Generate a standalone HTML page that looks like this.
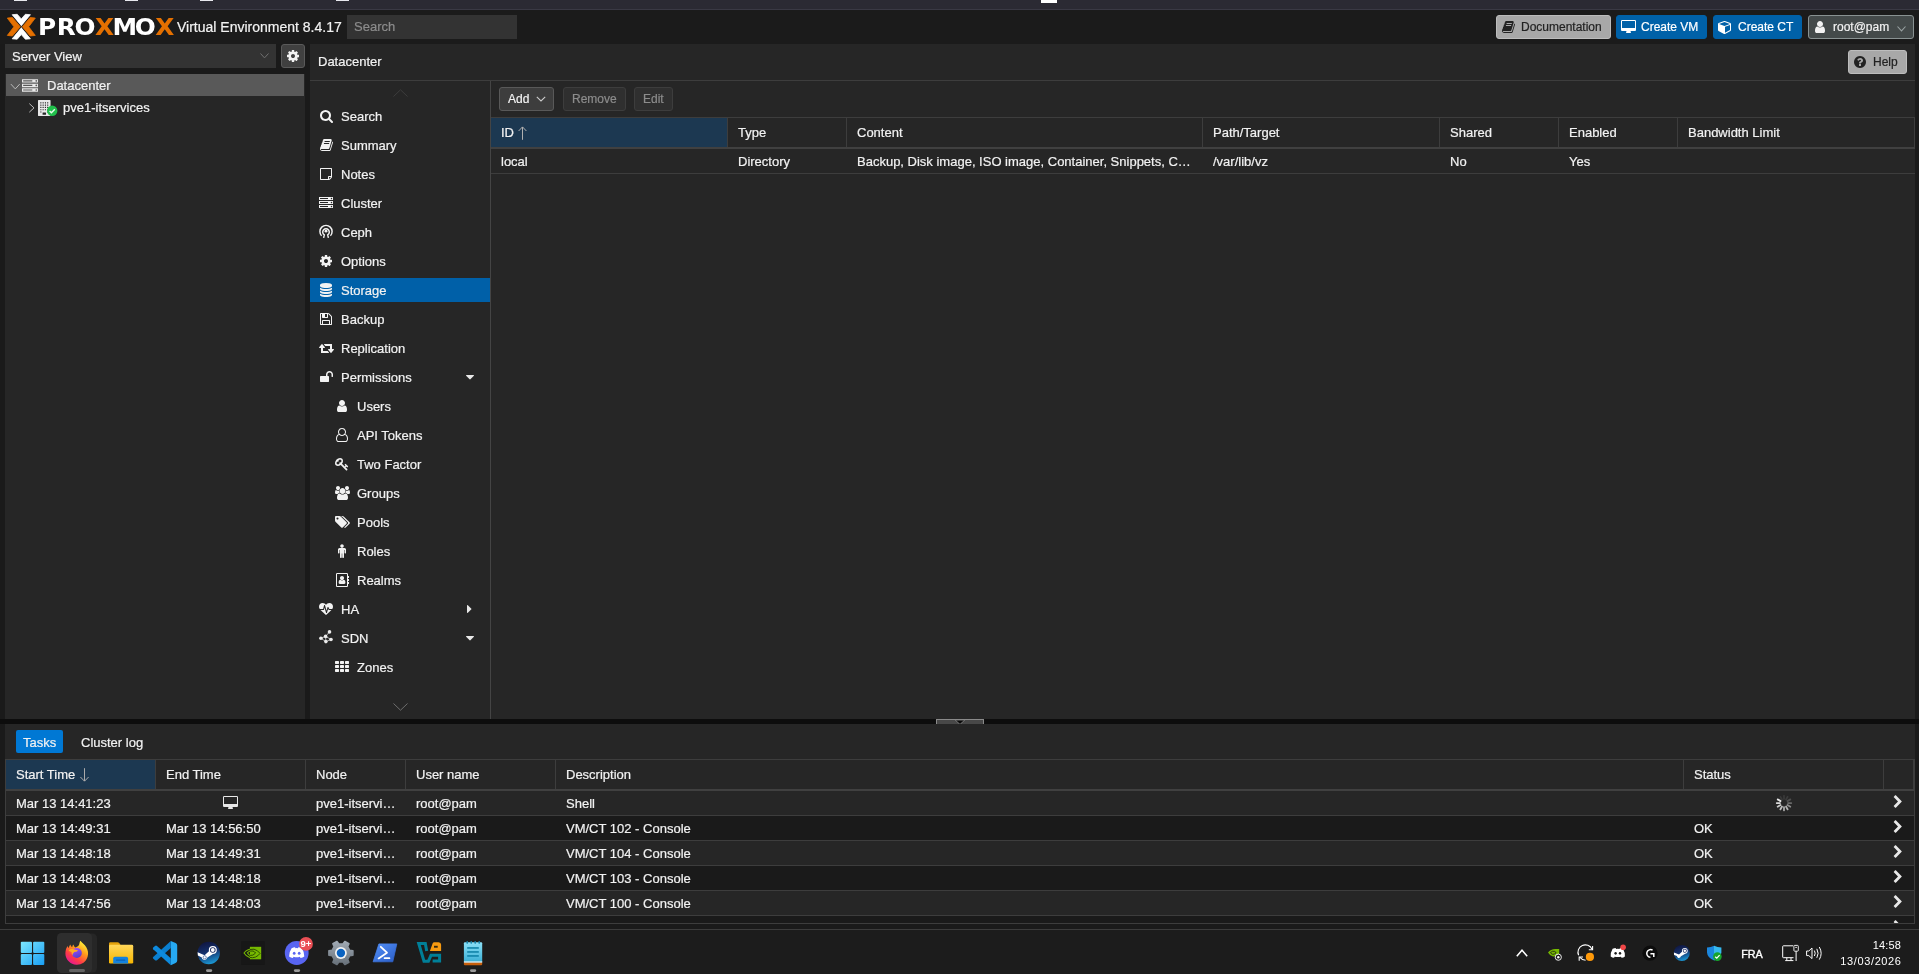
<!DOCTYPE html>
<html><head><meta charset="utf-8"><title>pve1-itservices - Proxmox Virtual Environment</title>
<style>
*{box-sizing:border-box}
html,body{margin:0;padding:0;background:#1a1a1a}
body{width:1919px;height:974px;overflow:hidden;background:#1a1a1a;color:#f2f2f2;font:13px "Liberation Sans",sans-serif;position:relative}
#root{left:0;top:0;width:1919px;height:974px;will-change:transform}
div,span,svg{position:absolute}
.ic{overflow:visible}
.t{white-space:pre;line-height:16px;height:16px;-webkit-text-stroke:0.2px currentColor}
</style></head>
<body><div id="root">
<div style="left:0px;top:0px;width:1919px;height:9px;background:#2b2a33;"></div>
<div style="left:0px;top:9px;width:1919px;height:1px;background:#3a3944;"></div>
<div style="left:14px;top:0px;width:13px;height:1px;background:#e8e8ee;"></div>
<div style="left:125px;top:0px;width:13px;height:1px;background:#e8e8ee;"></div>
<div style="left:200px;top:0px;width:13px;height:1px;background:#e8e8ee;"></div>
<div style="left:336px;top:0px;width:13px;height:1px;background:#e8e8ee;"></div>
<div style="left:1041px;top:0px;width:16px;height:3px;background:#ffffff;"></div>
<div style="left:0px;top:10px;width:1919px;height:34px;background:#1b1b1b;"></div>
<svg style="left:0px;top:10px;width:180px;height:34px" viewBox="0 10 180 34"><defs><linearGradient id="gpx" gradientUnits="userSpaceOnUse" x1="0" y1="0" x2="170" y2="0"><stop offset="0" stop-color="#fff"/><stop offset="0.5056" stop-color="#fff"/><stop offset="0.5056" stop-color="#e57000"/><stop offset="0.6107" stop-color="#e57000"/><stop offset="0.6107" stop-color="#fff"/><stop offset="0.8275" stop-color="#fff"/><stop offset="0.8275" stop-color="#e57000"/><stop offset="1" stop-color="#e57000"/></linearGradient></defs><g stroke-linejoin="round" stroke-width="0.8">
<path d="M12.2 14.7 L17.2 14.3 L21.3 18.9 L25.4 14.3 L30.4 14.7 L21.3 26.2 Z" fill="#fff" stroke="#fff"/>
<path d="M12.2 38.8 L17.2 39.2 L21.3 34.6 L25.4 39.2 L30.4 38.8 L21.3 27.3 Z" fill="#fff" stroke="#fff"/>
<path d="M7.3 18.1 L12.4 17.5 L20.3 26.75 L12.4 36 L7.3 35.4 L13.9 26.75 Z" fill="#1b1b1b" stroke="#1b1b1b" stroke-width="2"/>
<path d="M35.3 18.1 L30.2 17.5 L22.3 26.75 L30.2 36 L35.3 35.4 L28.7 26.75 Z" fill="#1b1b1b" stroke="#1b1b1b" stroke-width="2"/>
<path d="M7.3 18.1 L12.4 17.5 L20.3 26.75 L12.4 36 L7.3 35.4 L13.9 26.75 Z" fill="#e57000" stroke="#e57000"/>
<path d="M35.3 18.1 L30.2 17.5 L22.3 26.75 L30.2 36 L35.3 35.4 L28.7 26.75 Z" fill="#e57000" stroke="#e57000"/>
</g><text transform="scale(1.1,1)" x="34.61 51.50 67.82 86.29 102.34 122.50 141.20" y="35" font-family="DejaVu Sans, Liberation Sans, sans-serif" font-stretch="normal" font-weight="bold" font-size="22.5" fill="url(#gpx)">PROXMOX</text></svg>
<span class="t" style="left:177px;top:19px;font-size:14px">Virtual Environment 8.4.17</span>
<div style="left:347px;top:15px;width:170px;height:24px;background:#333333;"></div>
<span class="t" style="left:354px;top:19px;color:#8c8c8c">Search</span>
<div style="left:1496px;top:15px;width:115px;height:24px;background:#a8a8a8;border:1px solid #bdbdbd;border-radius:3px"></div><svg class="ic" style="left:1502px;top:20px;width:13.00px;height:14px;" viewBox="0 -1536 1664 1792"><path fill="#222" transform="scale(1,-1)" d="M1639 1058q40 -57 18 -129l-275 -906q-19 -64 -76.5 -107.5t-122.5 -43.5h-923q-77 0 -148.5 53.5t-99.5 131.5q-24 67 -2 127q0 4 3 27t4 37q1 8 -3 21.5t-3 19.5q2 11 8 21t16.5 23.5t16.5 23.5q23 38 45 91.5t30 91.5q3 10 0.5 30t-0.5 28q3 11 17 28t17 23 q21 36 42 92t25 90q1 9 -2.5 32t0.5 28q4 13 22 30.5t22 22.5q19 26 42.5 84.5t27.5 96.5q1 8 -3 25.5t-2 26.5q2 8 9 18t18 23t17 21q8 12 16.5 30.5t15 35t16 36t19.5 32t26.5 23.5t36 11.5t47.5 -5.5l-1 -3q38 9 51 9h761q74 0 114 -56t18 -130l-274 -906 q-36 -119 -71.5 -153.5t-128.5 -34.5h-869q-27 0 -38 -15q-11 -16 -1 -43q24 -70 144 -70h923q29 0 56 15.5t35 41.5l300 987q7 22 5 57q38 -15 59 -43zM575 1056q-4 -13 2 -22.5t20 -9.5h608q13 0 25.5 9.5t16.5 22.5l21 64q4 13 -2 22.5t-20 9.5h-608q-13 0 -25.5 -9.5 t-16.5 -22.5zM492 800q-4 -13 2 -22.5t20 -9.5h608q13 0 25.5 9.5t16.5 22.5l21 64q4 13 -2 22.5t-20 9.5h-608q-13 0 -25.5 -9.5t-16.5 -22.5z"/></svg><span class="t" style="left:1521px;top:19.0px;font-size:12px;color:#222">Documentation</span>
<div style="left:1616px;top:15px;width:91px;height:24px;background:#0061a8;border:1px solid #0061a8;border-radius:3px"></div><svg class="ic" style="left:1621px;top:20px;width:15.00px;height:14px;" viewBox="0 -1536 1920 1792"><path fill="#fff" transform="scale(1,-1)" d="M1792 544v832q0 13 -9.5 22.5t-22.5 9.5h-1600q-13 0 -22.5 -9.5t-9.5 -22.5v-832q0 -13 9.5 -22.5t22.5 -9.5h1600q13 0 22.5 9.5t9.5 22.5zM1920 1376v-1088q0 -66 -47 -113t-113 -47h-544q0 -37 16 -77.5t32 -71t16 -43.5q0 -26 -19 -45t-45 -19h-512q-26 0 -45 19 t-19 45q0 14 16 44t32 70t16 78h-544q-66 0 -113 47t-47 113v1088q0 66 47 113t113 47h1600q66 0 113 -47t47 -113z"/></svg><span class="t" style="left:1641px;top:19.0px;font-size:12px;color:#fff">Create VM</span>
<div style="left:1713px;top:15px;width:89px;height:24px;background:#0061a8;border:1px solid #0061a8;border-radius:3px"></div><svg class="ic" style="left:1718px;top:20px;width:14.00px;height:14px;" viewBox="0 -1536 1792 1792"><path fill="#fff" transform="scale(1,-1)" d="M896 -93l640 349v636l-640 -233v-752zM832 772l698 254l-698 254l-698 -254zM1664 1024v-768q0 -35 -18 -65t-49 -47l-704 -384q-28 -16 -61 -16t-61 16l-704 384q-31 17 -49 47t-18 65v768q0 40 23 73t61 47l704 256q22 8 44 8t44 -8l704 -256q38 -14 61 -47t23 -73z "/></svg><span class="t" style="left:1738px;top:19.0px;font-size:12px;color:#fff">Create CT</span>
<div style="left:1808px;top:15px;width:106px;height:24px;background:#444a4a;border:1px solid #899292;border-radius:3px"></div><svg class="ic" style="left:1815px;top:20px;width:10.00px;height:14px;" viewBox="0 -1536 1280 1792"><path fill="#f2f2f2" transform="scale(1,-1)" d="M1280 137q0 -109 -62.5 -187t-150.5 -78h-854q-88 0 -150.5 78t-62.5 187q0 85 8.5 160.5t31.5 152t58.5 131t94 89t134.5 34.5q131 -128 313 -128t313 128q76 0 134.5 -34.5t94 -89t58.5 -131t31.5 -152t8.5 -160.5zM1024 1024q0 -159 -112.5 -271.5t-271.5 -112.5 t-271.5 112.5t-112.5 271.5t112.5 271.5t271.5 112.5t271.5 -112.5t112.5 -271.5z"/></svg><span class="t" style="left:1833px;top:19.0px;font-size:12px;color:#f2f2f2">root@pam</span>
<svg style="left:1896.5px;top:25.6px;width:9px;height:6px" viewBox="0 0 9 6"><path d="M0.5 0.5 L4.5 4.9 L8.5 0.5" stroke="#98a1a1" stroke-width="1.1" fill="none"/></svg>
<div style="left:5px;top:44px;width:300px;height:675px;background:#262626;"></div>
<div style="left:5px;top:44px;width:271px;height:24px;background:#333333;"></div>
<span class="t" style="left:12px;top:49px;">Server View</span>
<svg style="left:259.5px;top:52.6px;width:9px;height:6px" viewBox="0 0 9 6"><path d="M0.5 0.5 L4.5 4.9 L8.5 0.5" stroke="#707070" stroke-width="1" fill="none"/></svg>
<div style="left:276px;top:44px;width:29px;height:24px;background:#1a1a1a;"></div>
<div style="left:281px;top:44px;width:24px;height:24px;background:#404040;border:1px solid #5a5a5a;border-radius:3px"></div>
<svg class="ic" style="left:287px;top:49px;width:12.00px;height:14px;" viewBox="0 -1536 1536 1792"><path fill="#f2f2f2" transform="scale(1,-1)" d="M1024 640q0 106 -75 181t-181 75t-181 -75t-75 -181t75 -181t181 -75t181 75t75 181zM1536 749v-222q0 -12 -8 -23t-20 -13l-185 -28q-19 -54 -39 -91q35 -50 107 -138q10 -12 10 -25t-9 -23q-27 -37 -99 -108t-94 -71q-12 0 -26 9l-138 108q-44 -23 -91 -38 q-16 -136 -29 -186q-7 -28 -36 -28h-222q-14 0 -24.5 8.5t-11.5 21.5l-28 184q-49 16 -90 37l-141 -107q-10 -9 -25 -9q-14 0 -25 11q-126 114 -165 168q-7 10 -7 23q0 12 8 23q15 21 51 66.5t54 70.5q-27 50 -41 99l-183 27q-13 2 -21 12.5t-8 23.5v222q0 12 8 23t19 13 l186 28q14 46 39 92q-40 57 -107 138q-10 12 -10 24q0 10 9 23q26 36 98.5 107.5t94.5 71.5q13 0 26 -10l138 -107q44 23 91 38q16 136 29 186q7 28 36 28h222q14 0 24.5 -8.5t11.5 -21.5l28 -184q49 -16 90 -37l142 107q9 9 24 9q13 0 25 -10q129 -119 165 -170q7 -8 7 -22 q0 -12 -8 -23q-15 -21 -51 -66.5t-54 -70.5q26 -50 41 -98l183 -28q13 -2 21 -12.5t8 -23.5z"/></svg>
<div style="left:5px;top:68px;width:300px;height:6px;background:#1a1a1a;"></div>
<div style="left:6px;top:74px;width:298px;height:22px;background:#595959;"></div>
<svg style="left:10px;top:83px;width:11px;height:7px" viewBox="0 0 11 7"><path d="M0.9 1.1 L5.3 5.9 L9.7 1.1" stroke="#bbb" stroke-width="1" fill="none"/></svg>
<svg class="ic" style="left:22px;top:78px;width:16.00px;height:16px;" viewBox="0 -1536 1792 1792"><path fill="#e8e8e8" transform="scale(1,-1)" d="M128 128h1024v128h-1024v-128zM128 640h1024v128h-1024v-128zM1696 192q0 40 -28 68t-68 28t-68 -28t-28 -68t28 -68t68 -28t68 28t28 68zM128 1152h1024v128h-1024v-128zM1696 704q0 40 -28 68t-68 28t-68 -28t-28 -68t28 -68t68 -28t68 28t28 68zM1696 1216 q0 40 -28 68t-68 28t-68 -28t-28 -68t28 -68t68 -28t68 28t28 68zM1792 384v-384h-1792v384h1792zM1792 896v-384h-1792v384h1792zM1792 1408v-384h-1792v384h1792z"/></svg>
<span class="t" style="left:47px;top:78px;">Datacenter</span>
<svg style="left:29px;top:103px;width:6px;height:10px" viewBox="0 0 6 10"><path d="M0.3 0.6 L5 4.9 L0.3 9.2" stroke="#bbb" stroke-width="1" fill="none"/></svg>
<svg class="ic" style="left:38px;top:100px;width:13.71px;height:16px;" viewBox="0 -1536 1536 1792"><path fill="#e8e8e8" transform="scale(1,-1)" d="M1344 1536q26 0 45 -19t19 -45v-1664q0 -26 -19 -45t-45 -19h-1280q-26 0 -45 19t-19 45v1664q0 26 19 45t45 19h1280zM512 1248v-64q0 -14 9 -23t23 -9h64q14 0 23 9t9 23v64q0 14 -9 23t-23 9h-64q-14 0 -23 -9t-9 -23zM512 992v-64q0 -14 9 -23t23 -9h64q14 0 23 9 t9 23v64q0 14 -9 23t-23 9h-64q-14 0 -23 -9t-9 -23zM512 736v-64q0 -14 9 -23t23 -9h64q14 0 23 9t9 23v64q0 14 -9 23t-23 9h-64q-14 0 -23 -9t-9 -23zM512 480v-64q0 -14 9 -23t23 -9h64q14 0 23 9t9 23v64q0 14 -9 23t-23 9h-64q-14 0 -23 -9t-9 -23zM384 160v64 q0 14 -9 23t-23 9h-64q-14 0 -23 -9t-9 -23v-64q0 -14 9 -23t23 -9h64q14 0 23 9t9 23zM384 416v64q0 14 -9 23t-23 9h-64q-14 0 -23 -9t-9 -23v-64q0 -14 9 -23t23 -9h64q14 0 23 9t9 23zM384 672v64q0 14 -9 23t-23 9h-64q-14 0 -23 -9t-9 -23v-64q0 -14 9 -23t23 -9h64 q14 0 23 9t9 23zM384 928v64q0 14 -9 23t-23 9h-64q-14 0 -23 -9t-9 -23v-64q0 -14 9 -23t23 -9h64q14 0 23 9t9 23zM384 1184v64q0 14 -9 23t-23 9h-64q-14 0 -23 -9t-9 -23v-64q0 -14 9 -23t23 -9h64q14 0 23 9t9 23zM896 -96v192q0 14 -9 23t-23 9h-320q-14 0 -23 -9 t-9 -23v-192q0 -14 9 -23t23 -9h320q14 0 23 9t9 23zM896 416v64q0 14 -9 23t-23 9h-64q-14 0 -23 -9t-9 -23v-64q0 -14 9 -23t23 -9h64q14 0 23 9t9 23zM896 672v64q0 14 -9 23t-23 9h-64q-14 0 -23 -9t-9 -23v-64q0 -14 9 -23t23 -9h64q14 0 23 9t9 23zM896 928v64 q0 14 -9 23t-23 9h-64q-14 0 -23 -9t-9 -23v-64q0 -14 9 -23t23 -9h64q14 0 23 9t9 23zM896 1184v64q0 14 -9 23t-23 9h-64q-14 0 -23 -9t-9 -23v-64q0 -14 9 -23t23 -9h64q14 0 23 9t9 23zM1152 160v64q0 14 -9 23t-23 9h-64q-14 0 -23 -9t-9 -23v-64q0 -14 9 -23t23 -9h64 q14 0 23 9t9 23zM1152 416v64q0 14 -9 23t-23 9h-64q-14 0 -23 -9t-9 -23v-64q0 -14 9 -23t23 -9h64q14 0 23 9t9 23zM1152 672v64q0 14 -9 23t-23 9h-64q-14 0 -23 -9t-9 -23v-64q0 -14 9 -23t23 -9h64q14 0 23 9t9 23zM1152 928v64q0 14 -9 23t-23 9h-64q-14 0 -23 -9 t-9 -23v-64q0 -14 9 -23t23 -9h64q14 0 23 9t9 23zM1152 1184v64q0 14 -9 23t-23 9h-64q-14 0 -23 -9t-9 -23v-64q0 -14 9 -23t23 -9h64q14 0 23 9t9 23z"/></svg>
<svg style="left:46px;top:105px;width:12px;height:12px" viewBox="0 0 12 12"><circle cx="6.2" cy="5.7" r="5.2" fill="#21bf4b"/><path d="M3.6 5.9 L5.4 7.7 L8.8 4.2" stroke="#eafbee" stroke-width="1.4" fill="none"/></svg>
<span class="t" style="left:63px;top:100px;">pve1-itservices</span>
<div style="left:310px;top:44px;width:1605px;height:675px;background:#262626;"></div>
<span class="t" style="left:318px;top:54px;">Datacenter</span>
<div style="left:310px;top:80px;width:1605px;height:1px;background:#3d3d3d;"></div>
<div style="left:1848px;top:50px;width:59px;height:24px;background:#a8a8a8;border:1px solid #bdbdbd;border-radius:3px"></div><svg class="ic" style="left:1854px;top:54.5px;width:12.00px;height:14px;" viewBox="0 -1536 1536 1792"><path fill="#222" transform="scale(1,-1)" d="M896 160v192q0 14 -9 23t-23 9h-192q-14 0 -23 -9t-9 -23v-192q0 -14 9 -23t23 -9h192q14 0 23 9t9 23zM1152 832q0 88 -55.5 163t-138.5 116t-170 41q-243 0 -371 -213q-15 -24 8 -42l132 -100q7 -6 19 -6q16 0 25 12q53 68 86 92q34 24 86 24q48 0 85.5 -26t37.5 -59 q0 -38 -20 -61t-68 -45q-63 -28 -115.5 -86.5t-52.5 -125.5v-36q0 -14 9 -23t23 -9h192q14 0 23 9t9 23q0 19 21.5 49.5t54.5 49.5q32 18 49 28.5t46 35t44.5 48t28 60.5t12.5 81zM1536 640q0 -209 -103 -385.5t-279.5 -279.5t-385.5 -103t-385.5 103t-279.5 279.5 t-103 385.5t103 385.5t279.5 279.5t385.5 103t385.5 -103t279.5 -279.5t103 -385.5z"/></svg><span class="t" style="left:1873px;top:54px;font-size:12px;color:#222">Help</span>
<div style="left:490px;top:81px;width:1px;height:638px;background:#444444;"></div>
<svg style="left:393px;top:89px;width:15px;height:8px" viewBox="0 0 15 8"><path d="M0.5 7.5 L7.5 0.8 L14.5 7.5" stroke="#3d3d3d" stroke-width="1" fill="none"/></svg>
<svg style="left:393px;top:703px;width:15px;height:8px" viewBox="0 0 15 8"><path d="M0.5 0.5 L7.5 7.2 L14.5 0.5" stroke="#6e6e6e" stroke-width="1" fill="none"/></svg>
<svg class="ic" style="left:319.5px;top:109px;width:13.00px;height:14px;" viewBox="0 -1536 1664 1792"><path fill="#f2f2f2" transform="scale(1,-1)" d="M1152 704q0 185 -131.5 316.5t-316.5 131.5t-316.5 -131.5t-131.5 -316.5t131.5 -316.5t316.5 -131.5t316.5 131.5t131.5 316.5zM1664 -128q0 -52 -38 -90t-90 -38q-54 0 -90 38l-343 342q-179 -124 -399 -124q-143 0 -273.5 55.5t-225 150t-150 225t-55.5 273.5 t55.5 273.5t150 225t225 150t273.5 55.5t273.5 -55.5t225 -150t150 -225t55.5 -273.5q0 -220 -124 -399l343 -343q37 -37 37 -90z"/></svg>
<span class="t" style="left:341px;top:109px;">Search</span>
<svg class="ic" style="left:319.5px;top:138px;width:13.00px;height:14px;" viewBox="0 -1536 1664 1792"><path fill="#f2f2f2" transform="scale(1,-1)" d="M1639 1058q40 -57 18 -129l-275 -906q-19 -64 -76.5 -107.5t-122.5 -43.5h-923q-77 0 -148.5 53.5t-99.5 131.5q-24 67 -2 127q0 4 3 27t4 37q1 8 -3 21.5t-3 19.5q2 11 8 21t16.5 23.5t16.5 23.5q23 38 45 91.5t30 91.5q3 10 0.5 30t-0.5 28q3 11 17 28t17 23 q21 36 42 92t25 90q1 9 -2.5 32t0.5 28q4 13 22 30.5t22 22.5q19 26 42.5 84.5t27.5 96.5q1 8 -3 25.5t-2 26.5q2 8 9 18t18 23t17 21q8 12 16.5 30.5t15 35t16 36t19.5 32t26.5 23.5t36 11.5t47.5 -5.5l-1 -3q38 9 51 9h761q74 0 114 -56t18 -130l-274 -906 q-36 -119 -71.5 -153.5t-128.5 -34.5h-869q-27 0 -38 -15q-11 -16 -1 -43q24 -70 144 -70h923q29 0 56 15.5t35 41.5l300 987q7 22 5 57q38 -15 59 -43zM575 1056q-4 -13 2 -22.5t20 -9.5h608q13 0 25.5 9.5t16.5 22.5l21 64q4 13 -2 22.5t-20 9.5h-608q-13 0 -25.5 -9.5 t-16.5 -22.5zM492 800q-4 -13 2 -22.5t20 -9.5h608q13 0 25.5 9.5t16.5 22.5l21 64q4 13 -2 22.5t-20 9.5h-608q-13 0 -25.5 -9.5t-16.5 -22.5z"/></svg>
<span class="t" style="left:341px;top:138px;">Summary</span>
<svg class="ic" style="left:320.0px;top:167px;width:12.00px;height:14px;" viewBox="0 -1536 1536 1792"><path fill="#f2f2f2" transform="scale(1,-1)" d="M1400 256h-248v-248q29 10 41 22l185 185q12 12 22 41zM1120 384h288v896h-1280v-1280h896v288q0 40 28 68t68 28zM1536 1312v-1024q0 -40 -20 -88t-48 -76l-184 -184q-28 -28 -76 -48t-88 -20h-1024q-40 0 -68 28t-28 68v1344q0 40 28 68t68 28h1344q40 0 68 -28t28 -68 z"/></svg>
<span class="t" style="left:341px;top:167px;">Notes</span>
<svg class="ic" style="left:319.0px;top:196px;width:14.00px;height:14px;" viewBox="0 -1536 1792 1792"><path fill="#f2f2f2" transform="scale(1,-1)" d="M128 128h1024v128h-1024v-128zM128 640h1024v128h-1024v-128zM1696 192q0 40 -28 68t-68 28t-68 -28t-28 -68t28 -68t68 -28t68 28t28 68zM128 1152h1024v128h-1024v-128zM1696 704q0 40 -28 68t-68 28t-68 -28t-28 -68t28 -68t68 -28t68 28t28 68zM1696 1216 q0 40 -28 68t-68 28t-68 -28t-28 -68t28 -68t68 -28t68 28t28 68zM1792 384v-384h-1792v384h1792zM1792 896v-384h-1792v384h1792zM1792 1408v-384h-1792v384h1792z"/></svg>
<span class="t" style="left:341px;top:196px;">Cluster</span>
<svg style="left:319px;top:223.8px;width:14px;height:14px" viewBox="0 0 14 14"><g fill="none" stroke="#f2f2f2" stroke-width="1.45">
<path d="M2.6 11.7 A6.1 6.1 0 1 1 11.4 11.7"/><path d="M4.6 13.8 L5.3 10.9 A3.3 3.3 0 1 1 8.7 10.9 L9.4 13.8"/></g>
<circle cx="7" cy="7.2" r="1.4" fill="#f2f2f2"/></svg>
<span class="t" style="left:341px;top:225px;">Ceph</span>
<svg class="ic" style="left:320.0px;top:254px;width:12.00px;height:14px;" viewBox="0 -1536 1536 1792"><path fill="#f2f2f2" transform="scale(1,-1)" d="M1024 640q0 106 -75 181t-181 75t-181 -75t-75 -181t75 -181t181 -75t181 75t75 181zM1536 749v-222q0 -12 -8 -23t-20 -13l-185 -28q-19 -54 -39 -91q35 -50 107 -138q10 -12 10 -25t-9 -23q-27 -37 -99 -108t-94 -71q-12 0 -26 9l-138 108q-44 -23 -91 -38 q-16 -136 -29 -186q-7 -28 -36 -28h-222q-14 0 -24.5 8.5t-11.5 21.5l-28 184q-49 16 -90 37l-141 -107q-10 -9 -25 -9q-14 0 -25 11q-126 114 -165 168q-7 10 -7 23q0 12 8 23q15 21 51 66.5t54 70.5q-27 50 -41 99l-183 27q-13 2 -21 12.5t-8 23.5v222q0 12 8 23t19 13 l186 28q14 46 39 92q-40 57 -107 138q-10 12 -10 24q0 10 9 23q26 36 98.5 107.5t94.5 71.5q13 0 26 -10l138 -107q44 23 91 38q16 136 29 186q7 28 36 28h222q14 0 24.5 -8.5t11.5 -21.5l28 -184q49 -16 90 -37l142 107q9 9 24 9q13 0 25 -10q129 -119 165 -170q7 -8 7 -22 q0 -12 -8 -23q-15 -21 -51 -66.5t-54 -70.5q26 -50 41 -98l183 -28q13 -2 21 -12.5t8 -23.5z"/></svg>
<span class="t" style="left:341px;top:254px;">Options</span>
<div style="left:310px;top:278px;width:180px;height:24px;background:#0060a8;"></div>
<svg class="ic" style="left:320.0px;top:283px;width:12.00px;height:14px;" viewBox="0 -1536 1536 1792"><path fill="#f2f2f2" transform="scale(1,-1)" d="M768 768q237 0 443 43t325 127v-170q0 -69 -103 -128t-280 -93.5t-385 -34.5t-385 34.5t-280 93.5t-103 128v170q119 -84 325 -127t443 -43zM768 0q237 0 443 43t325 127v-170q0 -69 -103 -128t-280 -93.5t-385 -34.5t-385 34.5t-280 93.5t-103 128v170q119 -84 325 -127 t443 -43zM768 384q237 0 443 43t325 127v-170q0 -69 -103 -128t-280 -93.5t-385 -34.5t-385 34.5t-280 93.5t-103 128v170q119 -84 325 -127t443 -43zM768 1536q208 0 385 -34.5t280 -93.5t103 -128v-128q0 -69 -103 -128t-280 -93.5t-385 -34.5t-385 34.5t-280 93.5 t-103 128v128q0 69 103 128t280 93.5t385 34.5z"/></svg>
<span class="t" style="left:341px;top:283px;">Storage</span>
<svg class="ic" style="left:320.0px;top:312px;width:12.00px;height:14px;" viewBox="0 -1536 1536 1792"><path fill="#f2f2f2" transform="scale(1,-1)" d="M384 0h768v384h-768v-384zM1280 0h128v896q0 14 -10 38.5t-20 34.5l-281 281q-10 10 -34 20t-39 10v-416q0 -40 -28 -68t-68 -28h-576q-40 0 -68 28t-28 68v416h-128v-1280h128v416q0 40 28 68t68 28h832q40 0 68 -28t28 -68v-416zM896 928v320q0 13 -9.5 22.5t-22.5 9.5 h-192q-13 0 -22.5 -9.5t-9.5 -22.5v-320q0 -13 9.5 -22.5t22.5 -9.5h192q13 0 22.5 9.5t9.5 22.5zM1536 896v-928q0 -40 -28 -68t-68 -28h-1344q-40 0 -68 28t-28 68v1344q0 40 28 68t68 28h928q40 0 88 -20t76 -48l280 -280q28 -28 48 -76t20 -88z"/></svg>
<span class="t" style="left:341px;top:312px;">Backup</span>
<svg class="ic" style="left:318.5px;top:341px;width:15.00px;height:14px;" viewBox="0 -1536 1920 1792"><path fill="#f2f2f2" transform="scale(1,-1)" d="M1280 32q0 -13 -9.5 -22.5t-22.5 -9.5h-960q-8 0 -13.5 2t-9 7t-5.5 8t-3 11.5t-1 11.5v13v11v160v416h-192q-26 0 -45 19t-19 45q0 24 15 41l320 384q19 22 49 22t49 -22l320 -384q15 -17 15 -41q0 -26 -19 -45t-45 -19h-192v-384h576q16 0 25 -11l160 -192q7 -10 7 -21 zM1920 448q0 -24 -15 -41l-320 -384q-20 -23 -49 -23t-49 23l-320 384q-15 17 -15 41q0 26 19 45t45 19h192v384h-576q-16 0 -25 12l-160 192q-7 9 -7 20q0 13 9.5 22.5t22.5 9.5h960q8 0 13.5 -2t9 -7t5.5 -8t3 -11.5t1 -11.5v-13v-11v-160v-416h192q26 0 45 -19t19 -45z "/></svg>
<span class="t" style="left:341px;top:341px;">Replication</span>
<svg class="ic" style="left:319.5px;top:370px;width:13.00px;height:14px;" viewBox="0 -1536 1664 1792"><path fill="#f2f2f2" transform="scale(1,-1)" d="M1664 960v-256q0 -26 -19 -45t-45 -19h-64q-26 0 -45 19t-19 45v256q0 106 -75 181t-181 75t-181 -75t-75 -181v-192h96q40 0 68 -28t28 -68v-576q0 -40 -28 -68t-68 -28h-960q-40 0 -68 28t-28 68v576q0 40 28 68t68 28h672v192q0 185 131.5 316.5t316.5 131.5 t316.5 -131.5t131.5 -316.5z"/></svg>
<span class="t" style="left:341px;top:370px;">Permissions</span>
<svg class="ic" style="left:466px;top:370px;width:8.00px;height:14px;" viewBox="0 -1536 1024 1792"><path fill="#e8e8e8" transform="scale(1,-1)" d="M1024 832q0 -26 -19 -45l-448 -448q-19 -19 -45 -19t-45 19l-448 448q-19 19 -19 45t19 45t45 19h896q26 0 45 -19t19 -45z"/></svg>
<svg class="ic" style="left:337.0px;top:399px;width:10.00px;height:14px;" viewBox="0 -1536 1280 1792"><path fill="#f2f2f2" transform="scale(1,-1)" d="M1280 137q0 -109 -62.5 -187t-150.5 -78h-854q-88 0 -150.5 78t-62.5 187q0 85 8.5 160.5t31.5 152t58.5 131t94 89t134.5 34.5q131 -128 313 -128t313 128q76 0 134.5 -34.5t94 -89t58.5 -131t31.5 -152t8.5 -160.5zM1024 1024q0 -159 -112.5 -271.5t-271.5 -112.5 t-271.5 112.5t-112.5 271.5t112.5 271.5t271.5 112.5t271.5 -112.5t112.5 -271.5z"/></svg>
<span class="t" style="left:357px;top:399px;">Users</span>
<svg class="ic" style="left:336.0px;top:428px;width:12.00px;height:14px;" viewBox="0 -1536 1536 1792"><path fill="#f2f2f2" transform="scale(1,-1)" d="M1201 752q47 -14 89.5 -38t89 -73t79.5 -115.5t55 -172t22 -236.5q0 -154 -100 -263.5t-241 -109.5h-854q-141 0 -241 109.5t-100 263.5q0 131 22 236.5t55 172t79.5 115.5t89 73t89.5 38q-79 125 -79 272q0 104 40.5 198.5t109.5 163.5t163.5 109.5t198.5 40.5 t198.5 -40.5t163.5 -109.5t109.5 -163.5t40.5 -198.5q0 -147 -79 -272zM768 1408q-159 0 -271.5 -112.5t-112.5 -271.5t112.5 -271.5t271.5 -112.5t271.5 112.5t112.5 271.5t-112.5 271.5t-271.5 112.5zM1195 -128q88 0 150.5 71.5t62.5 173.5q0 239 -78.5 377t-225.5 145 q-145 -127 -336 -127t-336 127q-147 -7 -225.5 -145t-78.5 -377q0 -102 62.5 -173.5t150.5 -71.5h854z"/></svg>
<span class="t" style="left:357px;top:428px;">API Tokens</span>
<svg class="ic" style="left:335.0px;top:457px;width:14.00px;height:14px;" viewBox="0 -1536 1792 1792"><path fill="#f2f2f2" transform="scale(1,-1)" d="M832 1024q0 80 -56 136t-136 56t-136 -56t-56 -136q0 -42 19 -83q-41 19 -83 19q-80 0 -136 -56t-56 -136t56 -136t136 -56t136 56t56 136q0 42 -19 83q41 -19 83 -19q80 0 136 56t56 136zM1683 320q0 -17 -49 -66t-66 -49q-9 0 -28.5 16t-36.5 33t-38.5 40t-24.5 26 l-96 -96l220 -220q28 -28 28 -68q0 -42 -39 -81t-81 -39q-40 0 -68 28l-671 671q-176 -131 -365 -131q-163 0 -265.5 102.5t-102.5 265.5q0 160 95 313t248 248t313 95q163 0 265.5 -102.5t102.5 -265.5q0 -189 -131 -365l355 -355l96 96q-3 3 -26 24.5t-40 38.5t-33 36.5 t-16 28.5q0 17 49 66t66 49q13 0 23 -10q6 -6 46 -44.5t82 -79.5t86.5 -86t73 -78t28.5 -41z"/></svg>
<span class="t" style="left:357px;top:457px;">Two Factor</span>
<svg class="ic" style="left:334.5px;top:486px;width:15.00px;height:14px;" viewBox="0 -1536 1920 1792"><path fill="#f2f2f2" transform="scale(1,-1)" d="M593 640q-162 -5 -265 -128h-134q-82 0 -138 40.5t-56 118.5q0 353 124 353q6 0 43.5 -21t97.5 -42.5t119 -21.5q67 0 133 23q-5 -37 -5 -66q0 -139 81 -256zM1664 3q0 -120 -73 -189.5t-194 -69.5h-874q-121 0 -194 69.5t-73 189.5q0 53 3.5 103.5t14 109t26.5 108.5 t43 97.5t62 81t85.5 53.5t111.5 20q10 0 43 -21.5t73 -48t107 -48t135 -21.5t135 21.5t107 48t73 48t43 21.5q61 0 111.5 -20t85.5 -53.5t62 -81t43 -97.5t26.5 -108.5t14 -109t3.5 -103.5zM640 1280q0 -106 -75 -181t-181 -75t-181 75t-75 181t75 181t181 75t181 -75 t75 -181zM1344 896q0 -159 -112.5 -271.5t-271.5 -112.5t-271.5 112.5t-112.5 271.5t112.5 271.5t271.5 112.5t271.5 -112.5t112.5 -271.5zM1920 671q0 -78 -56 -118.5t-138 -40.5h-134q-103 123 -265 128q81 117 81 256q0 29 -5 66q66 -23 133 -23q59 0 119 21.5t97.5 42.5 t43.5 21q124 0 124 -353zM1792 1280q0 -106 -75 -181t-181 -75t-181 75t-75 181t75 181t181 75t181 -75t75 -181z"/></svg>
<span class="t" style="left:357px;top:486px;">Groups</span>
<svg class="ic" style="left:334.5px;top:515px;width:15.00px;height:14px;" viewBox="0 -1536 1920 1792"><path fill="#f2f2f2" transform="scale(1,-1)" d="M448 1088q0 53 -37.5 90.5t-90.5 37.5t-90.5 -37.5t-37.5 -90.5t37.5 -90.5t90.5 -37.5t90.5 37.5t37.5 90.5zM1515 512q0 -53 -37 -90l-491 -492q-39 -37 -91 -37q-53 0 -90 37l-715 716q-38 37 -64.5 101t-26.5 117v416q0 52 38 90t90 38h416q53 0 117 -26.5t102 -64.5 l715 -714q37 -39 37 -91zM1899 512q0 -53 -37 -90l-491 -492q-39 -37 -91 -37q-36 0 -59 14t-53 45l470 470q37 37 37 90q0 52 -37 91l-715 714q-38 38 -102 64.5t-117 26.5h224q53 0 117 -26.5t102 -64.5l715 -714q37 -39 37 -91z"/></svg>
<span class="t" style="left:357px;top:515px;">Pools</span>
<svg class="ic" style="left:338.0px;top:544px;width:8.00px;height:14px;" viewBox="0 -1536 1024 1792"><path fill="#f2f2f2" transform="scale(1,-1)" d="M1024 832v-416q0 -40 -28 -68t-68 -28t-68 28t-28 68v352h-64v-912q0 -46 -33 -79t-79 -33t-79 33t-33 79v464h-64v-464q0 -46 -33 -79t-79 -33t-79 33t-33 79v912h-64v-352q0 -40 -28 -68t-68 -28t-68 28t-28 68v416q0 80 56 136t136 56h640q80 0 136 -56t56 -136z M736 1280q0 -93 -65.5 -158.5t-158.5 -65.5t-158.5 65.5t-65.5 158.5t65.5 158.5t158.5 65.5t158.5 -65.5t65.5 -158.5z"/></svg>
<span class="t" style="left:357px;top:544px;">Roles</span>
<svg class="ic" style="left:335.5px;top:573px;width:13.00px;height:14px;" viewBox="0 -1536 1664 1792"><path fill="#f2f2f2" transform="scale(1,-1)" d="M1028 892q0 -107 -76.5 -183t-183.5 -76t-183.5 76t-76.5 183q0 108 76.5 184t183.5 76t183.5 -76t76.5 -184zM980 672q46 0 82.5 -17t60 -47.5t39.5 -67t24 -81t11.5 -82.5t3.5 -79q0 -67 -39.5 -118.5t-105.5 -51.5h-576q-66 0 -105.5 51.5t-39.5 118.5q0 48 4.5 93.5 t18.5 98.5t36.5 91.5t63 64.5t93.5 26h5q7 -4 32 -19.5t35.5 -21t33 -17t37 -16t35 -9t39.5 -4.5t39.5 4.5t35 9t37 16t33 17t35.5 21t32 19.5zM1664 928q0 -13 -9.5 -22.5t-22.5 -9.5h-96v-128h96q13 0 22.5 -9.5t9.5 -22.5v-192q0 -13 -9.5 -22.5t-22.5 -9.5h-96v-128h96 q13 0 22.5 -9.5t9.5 -22.5v-192q0 -13 -9.5 -22.5t-22.5 -9.5h-96v-224q0 -66 -47 -113t-113 -47h-1216q-66 0 -113 47t-47 113v1472q0 66 47 113t113 47h1216q66 0 113 -47t47 -113v-224h96q13 0 22.5 -9.5t9.5 -22.5v-192zM1408 -96v1472q0 13 -9.5 22.5t-22.5 9.5h-1216 q-13 0 -22.5 -9.5t-9.5 -22.5v-1472q0 -13 9.5 -22.5t22.5 -9.5h1216q13 0 22.5 9.5t9.5 22.5z"/></svg>
<span class="t" style="left:357px;top:573px;">Realms</span>
<svg class="ic" style="left:319.0px;top:602px;width:14.00px;height:14px;" viewBox="0 -1536 1792 1792"><path fill="#f2f2f2" transform="scale(1,-1)" d="M1280 512h305q-5 -6 -10 -10.5t-9 -7.5l-3 -4l-623 -600q-18 -18 -44 -18t-44 18l-624 602q-5 2 -21 20h369q22 0 39.5 13.5t22.5 34.5l70 281l190 -667q6 -20 23 -33t39 -13q21 0 38 13t23 33l146 485l56 -112q18 -35 57 -35zM1792 940q0 -145 -103 -300h-369l-111 221 q-8 17 -25.5 27t-36.5 8q-45 -5 -56 -46l-129 -430l-196 686q-6 20 -23.5 33t-39.5 13t-39 -13.5t-22 -34.5l-116 -464h-423q-103 155 -103 300q0 220 127 344t351 124q62 0 126.5 -21.5t120 -58t95.5 -68.5t76 -68q36 36 76 68t95.5 68.5t120 58t126.5 21.5q224 0 351 -124 t127 -344z"/></svg>
<span class="t" style="left:341px;top:602px;">HA</span>
<svg class="ic" style="left:467px;top:602px;width:5.00px;height:14px;" viewBox="0 -1536 640 1792"><path fill="#e8e8e8" transform="scale(1,-1)" d="M576 640q0 -26 -19 -45l-448 -448q-19 -19 -45 -19t-45 19t-19 45v896q0 26 19 45t45 19t45 -19l448 -448q19 -19 19 -45z"/></svg>
<svg style="left:319px;top:630.4px;width:14px;height:14px" viewBox="0 0 14 14"><g stroke="#d0d0d0" stroke-width="0.8" fill="none">
<path d="M10.5 1.9 L6.6 6.4 L1.9 8.3 L6.9 11.6 L12 9.5 L6.6 6.4 L6.9 11.6"/></g>
<g fill="#eaeaea"><circle cx="10.5" cy="1.9" r="1.8"/><circle cx="6.6" cy="6.4" r="1.8"/><circle cx="1.9" cy="8.3" r="1.8"/><circle cx="12" cy="9.5" r="1.8"/><circle cx="6.9" cy="11.6" r="1.8"/></g></svg>
<span class="t" style="left:341px;top:631px;">SDN</span>
<svg class="ic" style="left:466px;top:631px;width:8.00px;height:14px;" viewBox="0 -1536 1024 1792"><path fill="#e8e8e8" transform="scale(1,-1)" d="M1024 832q0 -26 -19 -45l-448 -448q-19 -19 -45 -19t-45 19l-448 448q-19 19 -19 45t19 45t45 19h896q26 0 45 -19t19 -45z"/></svg>
<svg class="ic" style="left:335.0px;top:660px;width:14.00px;height:14px;" viewBox="0 -1536 1792 1792"><path fill="#f2f2f2" transform="scale(1,-1)" d="M512 288v-192q0 -40 -28 -68t-68 -28h-320q-40 0 -68 28t-28 68v192q0 40 28 68t68 28h320q40 0 68 -28t28 -68zM512 800v-192q0 -40 -28 -68t-68 -28h-320q-40 0 -68 28t-28 68v192q0 40 28 68t68 28h320q40 0 68 -28t28 -68zM1152 288v-192q0 -40 -28 -68t-68 -28h-320 q-40 0 -68 28t-28 68v192q0 40 28 68t68 28h320q40 0 68 -28t28 -68zM512 1312v-192q0 -40 -28 -68t-68 -28h-320q-40 0 -68 28t-28 68v192q0 40 28 68t68 28h320q40 0 68 -28t28 -68zM1152 800v-192q0 -40 -28 -68t-68 -28h-320q-40 0 -68 28t-28 68v192q0 40 28 68t68 28 h320q40 0 68 -28t28 -68zM1792 288v-192q0 -40 -28 -68t-68 -28h-320q-40 0 -68 28t-28 68v192q0 40 28 68t68 28h320q40 0 68 -28t28 -68zM1152 1312v-192q0 -40 -28 -68t-68 -28h-320q-40 0 -68 28t-28 68v192q0 40 28 68t68 28h320q40 0 68 -28t28 -68zM1792 800v-192 q0 -40 -28 -68t-68 -28h-320q-40 0 -68 28t-28 68v192q0 40 28 68t68 28h320q40 0 68 -28t28 -68zM1792 1312v-192q0 -40 -28 -68t-68 -28h-320q-40 0 -68 28t-28 68v192q0 40 28 68t68 28h320q40 0 68 -28t28 -68z"/></svg>
<span class="t" style="left:357px;top:660px;">Zones</span>
<div style="left:499px;top:87px;width:55px;height:24px;background:#3d3d3d;border:1px solid #595959;border-radius:3px"></div>
<span class="t" style="left:508px;top:91px;font-size:12px">Add</span>
<svg style="left:536px;top:96px;width:10px;height:6px" viewBox="0 0 10 6"><path d="M0.8 0.8 L5 5 L9.2 0.8" stroke="#ccc" stroke-width="1.1" fill="none"/></svg>
<div style="left:563px;top:87px;width:63px;height:24px;background:#2f2f2f;border:1px solid #3d3d3d;border-radius:3px"></div>
<span class="t" style="left:572px;top:91px;font-size:12px;color:#8c8c8c">Remove</span>
<div style="left:634px;top:87px;width:39px;height:24px;background:#2f2f2f;border:1px solid #3d3d3d;border-radius:3px"></div>
<span class="t" style="left:643px;top:91px;font-size:12px;color:#8c8c8c">Edit</span>
<div style="left:491px;top:117px;width:1424px;height:1px;background:#3d3d3d;"></div>
<div style="left:491px;top:147px;width:1424px;height:2px;background:#404040;"></div>
<div style="left:491px;top:118px;width:236px;height:29px;background:#1c3851;"></div>
<div style="left:727px;top:118px;width:1px;height:29px;background:#3d3d3d;"></div>
<span class="t" style="left:501px;top:125px;">ID</span>
<span class="t" style="left:501px;top:154px;">local</span>
<div style="left:846px;top:118px;width:1px;height:29px;background:#3d3d3d;"></div>
<span class="t" style="left:738px;top:125px;">Type</span>
<span class="t" style="left:738px;top:154px;">Directory</span>
<div style="left:1202px;top:118px;width:1px;height:29px;background:#3d3d3d;"></div>
<span class="t" style="left:857px;top:125px;">Content</span>
<span class="t" style="left:857px;top:154px;">Backup, Disk image, ISO image, Container, Snippets, C…</span>
<div style="left:1439px;top:118px;width:1px;height:29px;background:#3d3d3d;"></div>
<span class="t" style="left:1213px;top:125px;">Path/Target</span>
<span class="t" style="left:1213px;top:154px;">/var/lib/vz</span>
<div style="left:1558px;top:118px;width:1px;height:29px;background:#3d3d3d;"></div>
<span class="t" style="left:1450px;top:125px;">Shared</span>
<span class="t" style="left:1450px;top:154px;">No</span>
<div style="left:1677px;top:118px;width:1px;height:29px;background:#3d3d3d;"></div>
<span class="t" style="left:1569px;top:125px;">Enabled</span>
<span class="t" style="left:1569px;top:154px;">Yes</span>
<div style="left:1914px;top:118px;width:1px;height:29px;background:#3d3d3d;"></div>
<span class="t" style="left:1688px;top:125px;">Bandwidth Limit</span>
<span class="t" style="left:1688px;top:154px;"></span>
<svg style="left:518px;top:126px;width:9px;height:14px" viewBox="0 0 9 14"><path d="M4.5 13.8 L4.5 1 M0.6 5 L4.5 0.9 L8.4 5" stroke="#b0b0b0" stroke-width="1" fill="none"/></svg>
<div style="left:491px;top:173px;width:1424px;height:1px;background:#3d3d3d;"></div>
<div style="left:0px;top:719px;width:1919px;height:5px;background:#0d0d0d;"></div>
<div style="left:936px;top:719px;width:48px;height:5px;background:#484848;border:1px solid #8a8a8a;border-bottom:none"></div>
<svg style="left:954px;top:719px;width:12px;height:5px" viewBox="0 0 12 5"><path d="M1.2 1 L6 5.4 L10.8 1 Z" fill="#0a0a0a" stroke="#8a8a8a" stroke-width="0.8"/></svg>
<div style="left:5px;top:724px;width:1910px;height:200px;background:#262626;"></div>
<div style="left:16px;top:730px;width:47px;height:23px;background:#0078d4;border-radius:2px"></div>
<span class="t" style="left:23px;top:735px;">Tasks</span>
<span class="t" style="left:81px;top:735px;">Cluster log</span>
<div style="left:5px;top:759px;width:1909px;height:1px;background:#3d3d3d;"></div>
<div style="left:5px;top:789px;width:1909px;height:2px;background:#404040;"></div>
<div style="left:6px;top:760px;width:149px;height:29px;background:#1c3851;"></div>
<div style="left:155px;top:760px;width:1px;height:29px;background:#3d3d3d;"></div>
<span class="t" style="left:16px;top:767px;">Start Time</span>
<div style="left:305px;top:760px;width:1px;height:29px;background:#3d3d3d;"></div>
<span class="t" style="left:166px;top:767px;">End Time</span>
<div style="left:405px;top:760px;width:1px;height:29px;background:#3d3d3d;"></div>
<span class="t" style="left:316px;top:767px;">Node</span>
<div style="left:555px;top:760px;width:1px;height:29px;background:#3d3d3d;"></div>
<span class="t" style="left:416px;top:767px;">User name</span>
<div style="left:1683px;top:760px;width:1px;height:29px;background:#3d3d3d;"></div>
<span class="t" style="left:566px;top:767px;">Description</span>
<div style="left:1883px;top:760px;width:1px;height:29px;background:#3d3d3d;"></div>
<span class="t" style="left:1694px;top:767px;">Status</span>
<div style="left:1913px;top:760px;width:1px;height:29px;background:#3d3d3d;"></div>
<span class="t" style="left:1894px;top:767px;"></span>
<svg style="left:80px;top:768px;width:9px;height:14px" viewBox="0 0 9 14"><path d="M4.5 0.2 L4.5 13 M0.4 9 L4.5 13.2 L8.6 9" stroke="#aaa" stroke-width="1" fill="none"/></svg>
<div style="left:6px;top:815px;width:1908px;height:1px;background:#3d3d3d;"></div>
<span class="t" style="left:16px;top:796px;">Mar 13 14:41:23</span>
<svg class="ic" style="left:223px;top:796px;width:15.00px;height:14px;" viewBox="0 -1536 1920 1792"><path fill="#e8e8e8" transform="scale(1,-1)" d="M1792 544v832q0 13 -9.5 22.5t-22.5 9.5h-1600q-13 0 -22.5 -9.5t-9.5 -22.5v-832q0 -13 9.5 -22.5t22.5 -9.5h1600q13 0 22.5 9.5t9.5 22.5zM1920 1376v-1088q0 -66 -47 -113t-113 -47h-544q0 -37 16 -77.5t32 -71t16 -43.5q0 -26 -19 -45t-45 -19h-512q-26 0 -45 19 t-19 45q0 14 16 44t32 70t16 78h-544q-66 0 -113 47t-47 113v1088q0 66 47 113t113 47h1600q66 0 113 -47t47 -113z"/></svg>
<span class="t" style="left:316px;top:796px;">pve1-itservi…</span>
<span class="t" style="left:416px;top:796px;">root@pam</span>
<span class="t" style="left:566px;top:796px;">Shell</span>
<svg class="ic" style="left:1893px;top:795px;width:10.00px;height:14px;" viewBox="0 -1536 1280 1792"><path fill="#e8e8e8" transform="scale(1,-1)" d="M1107 659l-742 -742q-19 -19 -45 -19t-45 19l-166 166q-19 19 -19 45t19 45l531 531l-531 531q-19 19 -19 45t19 45l166 166q19 19 45 19t45 -19l742 -742q19 -19 19 -45t-19 -45z"/></svg>
<div style="left:6px;top:816px;width:1908px;height:24px;background:#1a1a1a;"></div>
<div style="left:6px;top:840px;width:1908px;height:1px;background:#3d3d3d;"></div>
<span class="t" style="left:16px;top:821px;">Mar 13 14:49:31</span>
<span class="t" style="left:166px;top:821px;">Mar 13 14:56:50</span>
<span class="t" style="left:316px;top:821px;">pve1-itservi…</span>
<span class="t" style="left:416px;top:821px;">root@pam</span>
<span class="t" style="left:566px;top:821px;">VM/CT 102 - Console</span>
<span class="t" style="left:1694px;top:821px;">OK</span>
<svg class="ic" style="left:1893px;top:820px;width:10.00px;height:14px;" viewBox="0 -1536 1280 1792"><path fill="#e8e8e8" transform="scale(1,-1)" d="M1107 659l-742 -742q-19 -19 -45 -19t-45 19l-166 166q-19 19 -19 45t19 45l531 531l-531 531q-19 19 -19 45t19 45l166 166q19 19 45 19t45 -19l742 -742q19 -19 19 -45t-19 -45z"/></svg>
<div style="left:6px;top:865px;width:1908px;height:1px;background:#3d3d3d;"></div>
<span class="t" style="left:16px;top:846px;">Mar 13 14:48:18</span>
<span class="t" style="left:166px;top:846px;">Mar 13 14:49:31</span>
<span class="t" style="left:316px;top:846px;">pve1-itservi…</span>
<span class="t" style="left:416px;top:846px;">root@pam</span>
<span class="t" style="left:566px;top:846px;">VM/CT 104 - Console</span>
<span class="t" style="left:1694px;top:846px;">OK</span>
<svg class="ic" style="left:1893px;top:845px;width:10.00px;height:14px;" viewBox="0 -1536 1280 1792"><path fill="#e8e8e8" transform="scale(1,-1)" d="M1107 659l-742 -742q-19 -19 -45 -19t-45 19l-166 166q-19 19 -19 45t19 45l531 531l-531 531q-19 19 -19 45t19 45l166 166q19 19 45 19t45 -19l742 -742q19 -19 19 -45t-19 -45z"/></svg>
<div style="left:6px;top:866px;width:1908px;height:24px;background:#1a1a1a;"></div>
<div style="left:6px;top:890px;width:1908px;height:1px;background:#3d3d3d;"></div>
<span class="t" style="left:16px;top:871px;">Mar 13 14:48:03</span>
<span class="t" style="left:166px;top:871px;">Mar 13 14:48:18</span>
<span class="t" style="left:316px;top:871px;">pve1-itservi…</span>
<span class="t" style="left:416px;top:871px;">root@pam</span>
<span class="t" style="left:566px;top:871px;">VM/CT 103 - Console</span>
<span class="t" style="left:1694px;top:871px;">OK</span>
<svg class="ic" style="left:1893px;top:870px;width:10.00px;height:14px;" viewBox="0 -1536 1280 1792"><path fill="#e8e8e8" transform="scale(1,-1)" d="M1107 659l-742 -742q-19 -19 -45 -19t-45 19l-166 166q-19 19 -19 45t19 45l531 531l-531 531q-19 19 -19 45t19 45l166 166q19 19 45 19t45 -19l742 -742q19 -19 19 -45t-19 -45z"/></svg>
<div style="left:6px;top:915px;width:1908px;height:1px;background:#3d3d3d;"></div>
<span class="t" style="left:16px;top:896px;">Mar 13 14:47:56</span>
<span class="t" style="left:166px;top:896px;">Mar 13 14:48:03</span>
<span class="t" style="left:316px;top:896px;">pve1-itservi…</span>
<span class="t" style="left:416px;top:896px;">root@pam</span>
<span class="t" style="left:566px;top:896px;">VM/CT 100 - Console</span>
<span class="t" style="left:1694px;top:896px;">OK</span>
<svg class="ic" style="left:1893px;top:895px;width:10.00px;height:14px;" viewBox="0 -1536 1280 1792"><path fill="#e8e8e8" transform="scale(1,-1)" d="M1107 659l-742 -742q-19 -19 -45 -19t-45 19l-166 166q-19 19 -19 45t19 45l531 531l-531 531q-19 19 -19 45t19 45l166 166q19 19 45 19t45 -19l742 -742q19 -19 19 -45t-19 -45z"/></svg>
<div style="left:6px;top:916px;width:1908px;height:7px;background:#1a1a1a;"></div>
<svg class="ic" style="left:1893px;top:920px;width:10.00px;height:14px;clip-path:inset(0 0 11px 0)" viewBox="0 -1536 1280 1792"><path fill="#e8e8e8" transform="scale(1,-1)" d="M1107 659l-742 -742q-19 -19 -45 -19t-45 19l-166 166q-19 19 -19 45t19 45l531 531l-531 531q-19 19 -19 45t19 45l166 166q19 19 45 19t45 -19l742 -742q19 -19 19 -45t-19 -45z"/></svg>
<div style="left:5px;top:923px;width:1910px;height:1px;background:#3d3d3d;"></div>
<div style="left:5px;top:759px;width:1px;height:165px;background:#3d3d3d;"></div>
<div style="left:1914px;top:759px;width:1px;height:165px;background:#3d3d3d;"></div>
<svg style="left:1775px;top:794px;width:18px;height:18px" viewBox="-9 -9.07 18 18"><rect x="-0.9" y="-8.1" width="1.8" height="4.9" rx="0.7" fill="#f2f2f2" opacity="0.95" transform="rotate(300)"/><rect x="-0.9" y="-8.1" width="1.8" height="4.9" rx="0.7" fill="#f2f2f2" opacity="0.88" transform="rotate(270)"/><rect x="-0.9" y="-8.1" width="1.8" height="4.9" rx="0.7" fill="#f2f2f2" opacity="0.8" transform="rotate(240)"/><rect x="-0.9" y="-8.1" width="1.8" height="4.9" rx="0.7" fill="#f2f2f2" opacity="0.74" transform="rotate(210)"/><rect x="-0.9" y="-8.1" width="1.8" height="4.9" rx="0.7" fill="#f2f2f2" opacity="0.64" transform="rotate(180)"/><rect x="-0.9" y="-8.1" width="1.8" height="4.9" rx="0.7" fill="#f2f2f2" opacity="0.68" transform="rotate(150)"/><rect x="-0.9" y="-8.1" width="1.8" height="4.9" rx="0.7" fill="#f2f2f2" opacity="0.5" transform="rotate(120)"/><rect x="-0.9" y="-8.1" width="1.8" height="4.9" rx="0.7" fill="#f2f2f2" opacity="0.33" transform="rotate(90)"/><rect x="-0.9" y="-8.1" width="1.8" height="4.9" rx="0.7" fill="#f2f2f2" opacity="0.2" transform="rotate(60)"/><rect x="-0.9" y="-8.1" width="1.8" height="4.9" rx="0.7" fill="#f2f2f2" opacity="0.1" transform="rotate(30)"/><rect x="-0.9" y="-8.1" width="1.8" height="4.9" rx="0.7" fill="#f2f2f2" opacity="0.09" transform="rotate(0)"/><rect x="-0.9" y="-8.1" width="1.8" height="4.9" rx="0.7" fill="#f2f2f2" opacity="0.09" transform="rotate(-30)"/></svg>
<div style="left:0px;top:929px;width:1919px;height:45px;background:#1c1c1c;"></div>
<div style="left:0px;top:929px;width:1919px;height:1px;background:#3c3c3c;"></div>
<svg style="left:0px;top:929px;width:1919px;height:45px" viewBox="0 929 1919 45"><defs>
<linearGradient id="gwin" gradientUnits="userSpaceOnUse" x1="20" y1="941" x2="45" y2="966"><stop offset="0" stop-color="#80eaff"/><stop offset="1" stop-color="#159bf3"/></linearGradient>
<linearGradient id="gff" x1="0.85" y1="0.1" x2="0.25" y2="1"><stop offset="0" stop-color="#fff23a"/><stop offset="0.35" stop-color="#ff9a1a"/><stop offset="0.7" stop-color="#ff3b47"/><stop offset="1" stop-color="#e3159a"/></linearGradient>
<linearGradient id="gffg" x1="0.3" y1="0" x2="0.7" y2="1"><stop offset="0" stop-color="#a24dff"/><stop offset="1" stop-color="#4f3ec8"/></linearGradient>
<linearGradient id="gfold" x1="0" y1="0" x2="0" y2="1"><stop offset="0" stop-color="#ffd75a"/><stop offset="1" stop-color="#f7b500"/></linearGradient>
<linearGradient id="gsteam" x1="0.3" y1="0" x2="0.6" y2="1"><stop offset="0" stop-color="#10153f"/><stop offset="0.5" stop-color="#14336f"/><stop offset="1" stop-color="#1b9bd7"/></linearGradient>
<linearGradient id="ggear" x1="0" y1="0" x2="0" y2="1"><stop offset="0" stop-color="#a0a9b3"/><stop offset="1" stop-color="#68717a"/></linearGradient>
<linearGradient id="gps" x1="0" y1="0" x2="1" y2="1"><stop offset="0" stop-color="#5391fb"/><stop offset="1" stop-color="#2a5cc4"/></linearGradient>
<linearGradient id="gnote" x1="0" y1="0" x2="0" y2="1"><stop offset="0" stop-color="#8be0f7"/><stop offset="1" stop-color="#38aed4"/></linearGradient>
<linearGradient id="gshield" x1="0" y1="0" x2="1" y2="0"><stop offset="0" stop-color="#1b86dd"/><stop offset="0.5" stop-color="#1b86dd"/><stop offset="0.5" stop-color="#35b8ee"/><stop offset="1" stop-color="#35b8ee"/></linearGradient>
</defs>
<rect x="20.8" y="941.8" width="11.2" height="11.1" rx="1" fill="url(#gwin)"/>
<rect x="33.1" y="941.8" width="11.2" height="11.1" rx="1" fill="url(#gwin)"/>
<rect x="20.8" y="954" width="11.2" height="11.1" rx="1" fill="url(#gwin)"/>
<rect x="33.1" y="954" width="11.2" height="11.1" rx="1" fill="url(#gwin)"/>
<rect x="62" y="933.5" width="35" height="39" rx="4.5" fill="#262626"/>
<rect x="57" y="933" width="35" height="40" rx="4.5" fill="#2e2e2e"/>
<rect x="69" y="969" width="16" height="3" rx="1.5" fill="#636363"/>
<g>
<path d="M77.4 946.4 C78.6 946 79.2 944.6 79.4 943.4 C79.6 942.2 80 941.4 80.4 940.8 C82 943 84.6 944.4 86.3 947.2 C88 950 88.6 953.5 87.6 956.8 C86 962 81.5 965 76.5 964.8 C70.5 964.6 65.4 959.8 65.4 953.6 C65.4 950.2 66.4 947.6 67.6 946 C67.8 947 68.2 947.6 68.8 948 C69 946.4 69.6 945.2 70.4 944.4 C70.8 945.8 71.4 946.6 72.2 947 C72.4 945.8 72.8 945 73.4 944.6 C73.8 946 74.6 947.2 75.6 947.6 C76.2 947 76.8 946.6 77.4 946.4 Z" fill="url(#gff)"/>
<circle cx="76.8" cy="953" r="5" fill="url(#gffg)"/>
<path d="M68.6 950.4 C70.6 948.6 73.4 948.8 75.2 949.8 C76.4 950.4 77.6 950.4 78.2 950 C77.6 951.4 76.4 951.8 75.2 951.8 C73.6 952.4 72.4 953.8 72.6 955.6 C71.8 954.2 71.4 953 71.6 952 C70.6 951.8 69.4 951.2 68.6 950.4 Z" fill="#ffac22"/>
</g>
<path d="M109 943.6 Q109 942.2 110.4 942.2 L117.6 942.2 Q118.6 942.2 119.2 943 L120.6 944.8 L109 947 Z" fill="#e3a20b"/>
<path d="M109 946 Q109 944.8 110.2 944.8 L131.8 944.8 Q133.2 944.8 133.2 946.2 L133.2 962.2 Q133.2 963.5 131.9 963.5 L110.3 963.5 Q109 963.5 109 962.2 Z" fill="url(#gfold)"/>
<path d="M113.2 958.6 Q113.2 956.8 115 956.8 L126.3 956.8 Q128.1 956.8 128.1 958.6 L128.1 963.5 L113.2 963.5 Z" fill="#1482de"/>
<rect x="116" y="959.6" width="9.3" height="1.2" rx="0.6" fill="#0b62b4"/>
<path d="M170.8 941 L175.6 943 Q177.2 943.7 177.2 945.3 L177.2 960.7 Q177.2 962.3 175.6 963 L170.8 965.2 Z" fill="#26a9f3"/>
<path d="M170.8 941 L170.8 948 L157 960.2 Q156 961 155 960.2 L153.2 958.6 Q152.4 957.8 153.2 957 Z" fill="#0a7fd0"/>
<path d="M170.8 965.2 L170.8 958.2 L157 946 Q156 945.2 155 946 L153.2 947.6 Q152.4 948.4 153.2 949.2 Z" fill="#0d8ade"/>
<circle cx="208.7" cy="953" r="11.2" fill="url(#gsteam)"/>
<path d="M197.6 952.2 L204.6 955.2 L209.2 951 L213.8 953.6 L207.4 957.6 Q206.4 960.4 203.8 959.8 Q201.8 959.2 201.8 957.4 L197.9 955.6 Z" fill="#fff"/>
<circle cx="212.8" cy="950" r="4" fill="#fff"/><circle cx="212.8" cy="950" r="2.8" fill="#1b2c63"/><circle cx="212.8" cy="950" r="1.9" fill="#fff"/>
<circle cx="204.7" cy="957.3" r="1.6" fill="none" stroke="#24478c" stroke-width="0.6"/>
<rect x="206" y="969.3" width="6.2" height="2.6" rx="1.3" fill="#9a9a9a"/>
<rect x="241.2" y="941.2" width="23.6" height="23.7" fill="#171717"/>
<clipPath id="nvc"><rect x="249.9" y="946.8" width="11.3" height="12.5"/></clipPath>
<g fill="none" stroke="#76b900" stroke-width="1.1"><path d="M244 953 Q248 948.2 254 949.2 Q258 950.4 260 953.4 Q256 958.8 249.6 957.4 Q246 956.2 244 953 Z"/><path d="M247.4 952.8 Q250 950.2 253 951 Q254.8 951.8 255.6 953 Q253 956 250.2 955.4 Q248.4 954.6 247.4 952.8 Z"/></g>
<rect x="249.9" y="946.8" width="11.3" height="12.5" fill="#76b900"/>
<g fill="none" stroke="#2f4d00" stroke-width="1" clip-path="url(#nvc)"><path d="M244 953 Q248 948.2 254 949.2 Q258 950.4 260 953.4 Q256 958.8 249.6 957.4 Q246 956.2 244 953 Z"/><path d="M247.4 952.8 Q250 950.2 253 951 Q254.8 951.8 255.6 953 Q253 956 250.2 955.4 Q248.4 954.6 247.4 952.8 Z"/></g>
<circle cx="296.7" cy="953" r="11.9" fill="#5865f2"/>
<path d="M291.6 948.2 Q294 947.2 295 947.3 L295.5 948.2 Q296.7 948 297.9 948.2 L298.4 947.3 Q299.6 947.2 301.8 948.2 Q304.6 952.4 304.3 956.4 Q302.6 957.7 300.6 958 L299.8 956.8 Q298.3 957.3 296.7 957.3 Q295.1 957.3 293.6 956.8 L292.8 958 Q290.8 957.7 289.1 956.4 Q288.8 952.4 291.6 948.2 Z" fill="#fff"/>
<ellipse cx="294.2" cy="953.2" rx="1.35" ry="1.5" fill="#5865f2"/><ellipse cx="299.2" cy="953.2" rx="1.35" ry="1.5" fill="#5865f2"/>
<circle cx="306" cy="943.9" r="6.9" fill="#ea4f55"/>
<text x="306" y="947.2" text-anchor="middle" font-family="Liberation Sans, sans-serif" font-weight="bold" font-size="9.5" fill="#fff">9+</text>
<rect x="293.9" y="969.3" width="6.2" height="2.6" rx="1.3" fill="#9a9a9a"/>
<path d="M349.70 950.31 L352.88 950.67 L352.88 955.33 L349.70 955.69 L347.63 959.27 L348.90 962.21 L344.87 964.54 L342.97 961.96 L338.83 961.96 L336.93 964.54 L332.90 962.21 L334.17 959.27 L332.10 955.69 L328.92 955.33 L328.92 950.67 L332.10 950.31 L334.17 946.73 L332.90 943.79 L336.93 941.46 L338.83 944.04 L342.97 944.04 L344.87 941.46 L348.90 943.79 L347.63 946.73 Z" fill="url(#ggear)" stroke="url(#ggear)" stroke-width="1.6" stroke-linejoin="round"/>
<circle cx="340.9" cy="953" r="5.9" fill="#f3f3f3"/><circle cx="340.9" cy="953" r="4.2" fill="#0b63c1"/>
<path d="M378.9 943.9 L396.8 943.9 L392.8 961.8 L373.1 961.8 Z" fill="url(#gps)" stroke="url(#gps)" stroke-width="0.8" stroke-linejoin="round"/>
<path d="M380.8 946.8 L387 952.7 L378.6 958.4" fill="none" stroke="#fff" stroke-width="1.8" stroke-linecap="round" stroke-linejoin="round"/>
<path d="M384.6 958.2 L389.4 958.2" stroke="#fff" stroke-width="1.8" stroke-linecap="round"/>
<g fill="none" stroke="#007f98" stroke-width="3" stroke-linejoin="miter">
<path d="M426.7 951 L425.3 943.4 L418.7 943.4 L424 961.2 L428.4 961.2 L431 955.3 L439.6 955.3 L439.6 961 L432.6 961"/></g>
<path d="M429.9 950.9 L432.6 943.4 Q433 942.2 434.4 942.2 L438.6 942.2 Q441.1 942.4 441.1 944.8 L441.1 950.9 Z" fill="#f79a10"/>
<rect x="434" y="945.8" width="3.7" height="1.9" fill="#33260f"/>
<rect x="463.9" y="942.2" width="18.3" height="20.6" rx="1" fill="url(#gnote)"/>
<g fill="#1b86ad"><rect x="466.4" y="940.9" width="1.6" height="3" rx="0.8"/><rect x="470.4" y="940.9" width="1.6" height="3" rx="0.8"/><rect x="474.4" y="940.9" width="1.6" height="3" rx="0.8"/><rect x="478.4" y="940.9" width="1.6" height="3" rx="0.8"/></g>
<g fill="#0b7fa5"><rect x="467.2" y="947.2" width="11.6" height="1.5"/><rect x="467.2" y="951.2" width="11.6" height="1.5"/><rect x="467.2" y="955.2" width="11.6" height="1.5"/></g>
<rect x="463.9" y="961.4" width="18.3" height="1.4" fill="#f2f2f2"/>
<path d="M463.9 962.8 L482.2 962.8 L482.2 964.2 Q482.2 965.2 481.2 965.2 L464.9 965.2 Q463.9 965.2 463.9 964.2 Z" fill="#c75f0c"/>
<rect x="470" y="969.3" width="6.2" height="2.6" rx="1.3" fill="#9a9a9a"/>
<path d="M1516.8 956.3 L1522 950.2 L1527.2 956.3" fill="none" stroke="#fff" stroke-width="1.5"/>
<path d="M1548 952.6 Q1551 948.6 1556 949 L1559.2 949 L1559.2 956 L1553 956.6 Q1549.6 955.6 1548 952.6 Z" fill="#76b900"/>
<path d="M1550.4 952.6 Q1552.4 950.6 1554.8 951.4 Q1556 952 1556 953 Q1554 954.8 1552.2 954.2 Q1551 953.6 1550.4 952.6 Z" fill="none" stroke="#1c1c1c" stroke-width="0.8"/>
<circle cx="1558.3" cy="957.2" r="3.1" fill="#1c1c1c" stroke="#fff" stroke-width="0.9"/><circle cx="1558.3" cy="957.2" r="1.2" fill="#fff"/>
<g fill="none" stroke="#fff" stroke-width="1.1"><path d="M1578.6 955.2 A7.2 7.2 0 0 1 1592 949.2"/><path d="M1592.6 946 L1592.6 949.8 L1588.8 949.8"/>
<path d="M1585.6 960.2 A7.2 7.2 0 0 1 1580 957.4"/><path d="M1579.2 960.8 L1579.2 957 L1583 957"/></g>
<circle cx="1589.9" cy="956.9" r="4.1" fill="#ff9a0a"/>
<path d="M1612.6 948.8 Q1614.6 948 1615.6 948 L1616.1 948.9 Q1617.8 948.7 1619.5 948.9 L1620 948 Q1621 948 1623 948.8 Q1625.2 952.6 1624.9 956.4 Q1623.4 957.5 1621.6 957.8 L1620.9 956.7 Q1619.4 957.1 1617.8 957.1 Q1616.2 957.1 1614.7 956.7 L1614 957.8 Q1612.2 957.5 1610.7 956.4 Q1610.4 952.6 1612.6 948.8 Z" fill="#fff"/>
<ellipse cx="1615.6" cy="953.3" rx="1.2" ry="1.4" fill="#1c1c1c"/><ellipse cx="1620" cy="953.3" rx="1.2" ry="1.4" fill="#1c1c1c"/>
<circle cx="1623.1" cy="947.3" r="2.8" fill="#f04747"/>
<circle cx="1650" cy="953.2" r="7.6" fill="#0c0c0c"/>
<path d="M1652.6 950.2 A3.8 3.8 0 1 0 1650.4 957.2" fill="none" stroke="#fff" stroke-width="1.5"/>
<path d="M1650.4 953.7 L1653.8 953.7 L1653.8 957" fill="none" stroke="#fff" stroke-width="1.5"/>
<circle cx="1681.8" cy="953" r="8" fill="url(#gsteam)"/>
<path d="M1673.9 952.4 L1679 954.6 L1682.2 951.6 L1685.6 953.4 L1681 956.3 Q1680.2 958.3 1678.3 957.9 Q1677 957.4 1676.9 956.1 L1674.1 954.9 Z" fill="#fff"/>
<circle cx="1684.8" cy="950.8" r="2.9" fill="#fff"/><circle cx="1684.8" cy="950.8" r="2" fill="#1b2c63"/><circle cx="1684.8" cy="950.8" r="1.3" fill="#fff"/>
<path d="M1707 947.6 Q1711 947.4 1714.2 945.8 Q1717.4 947.4 1721.4 947.6 L1721.4 952.4 Q1721 957.8 1714.2 960.4 Q1707.4 957.8 1707 952.4 Z" fill="url(#gshield)"/>
<circle cx="1717.4" cy="956.6" r="4.3" fill="#17a42d"/>
<path d="M1715.2 956.7 L1716.8 958.2 L1719.6 955.2" fill="none" stroke="#fff" stroke-width="1.2"/>
<g fill="none" stroke="#fff" stroke-width="1"><path d="M1793.2 945.8 L1783.4 945.8 Q1782.7 945.8 1782.7 946.5 L1782.7 957 Q1782.7 957.7 1783.4 957.7 L1793.5 957.7"/>
<path d="M1786.8 957.7 L1786.8 960.4 M1791 957.7 L1791 960.4 M1785.2 960.6 L1793.4 960.6"/>
<rect x="1793.9" y="945.4" width="4.4" height="5.8" rx="0.8" stroke-width="0.9"/><path d="M1796.1 951.2 L1796.1 961"/><path d="M1795.2 947.4 L1797 947.4" stroke-width="0.8"/></g>
<g fill="none" stroke="#fff" stroke-width="1"><path d="M1806.6 951 L1808.8 951 L1812 948 L1812 958.6 L1808.8 955.6 L1806.6 955.6 Z" stroke-linejoin="round"/>
<path d="M1814.4 950.6 Q1816 953.3 1814.4 956"/><path d="M1816.8 948.8 Q1819.4 953.3 1816.8 957.8"/><path d="M1819.3 947 Q1823 953.3 1819.3 959.6"/></g>
<text x="1741.2" y="957.9" font-family="Liberation Sans, sans-serif" font-size="10.8" fill="#fff" stroke="#fff" stroke-width="0.35">FRA</text>
<text x="1901.2" y="949" text-anchor="end" font-family="Liberation Sans, sans-serif" font-size="11" fill="#fff" letter-spacing="0.2">14:58</text>
<text x="1901.6" y="964.8" text-anchor="end" font-family="Liberation Sans, sans-serif" font-size="11" fill="#fff" letter-spacing="0.62">13/03/2026</text></svg>
</div></body></html>
